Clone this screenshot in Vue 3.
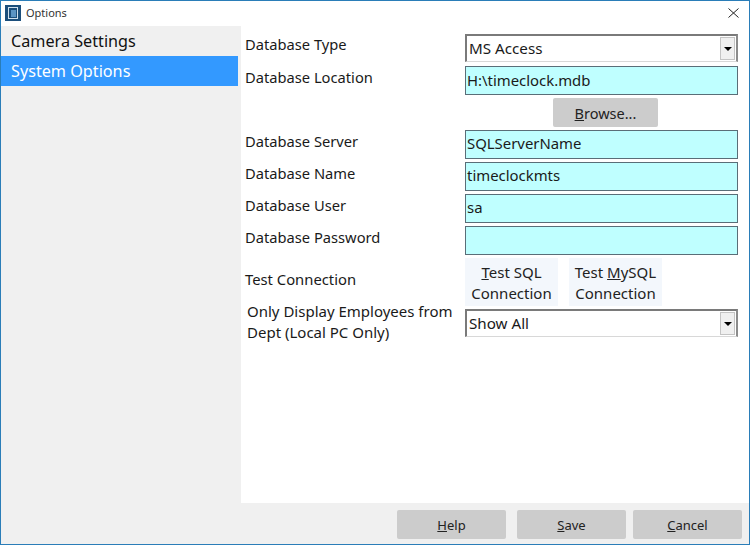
<script setup>
const fields = [
  { label: 'Database Server', value: 'SQLServerName' },
  { label: 'Database Name', value: 'timeclockmts' },
  { label: 'Database User', value: 'sa' },
  { label: 'Database Password', value: '' },
];
</script>

<template>
  <div class="window">
    <div class="titlebar">
      <svg class="app-icon" width="16" height="16" viewBox="0 0 16 16">
        <rect width="16" height="16" fill="#1c4f7c" />
        <rect x="3" y="2" width="10" height="12" fill="#cfe0ee" />
        <rect x="4" y="3" width="8" height="10" fill="#1c4f7c" />
        <rect x="6" y="5" width="5" height="7" fill="#5b94c4" />
      </svg>
      <span class="title">Options</span>
      <svg class="close" width="11" height="10" viewBox="0 0 11 10">
        <path d="M0.5 0.5 L10.5 9.5 M10.5 0.5 L0.5 9.5" stroke="#222" stroke-width="1" fill="none" />
      </svg>
    </div>

    <div class="body">
      <div class="sidebar">
        <div class="nav-item">Camera Settings</div>
        <div class="nav-item active">System Options</div>
      </div>

      <div class="content">
        <div class="row row-combo">
          <label>Database Type</label>
          <div class="combo">
            <span>MS Access</span>
            <span class="arrow"><i></i></span>
          </div>
        </div>
        <div class="row row-location">
          <label>Database Location</label>
          <div class="input">H:\timeclock.mdb</div>
        </div>
        <div class="browse-row">
          <button class="btn browse"><u>B</u>rowse...</button>
        </div>
        <div v-for="f in fields" :key="f.label" class="row row-field">
          <label>{{ f.label }}</label>
          <div class="input">{{ f.value }}</div>
        </div>
        <div class="row row-test">
          <label>Test Connection</label>
          <div class="test-buttons">
            <button class="test"><u>T</u>est SQL<br />Connection</button>
            <button class="test">Test <u>M</u>ySQL<br />Connection</button>
          </div>
        </div>
        <div class="row row-dept">
          <label class="dept-label">Only Display Employees from Dept (Local PC Only)</label>
          <div class="combo">
            <span>Show All</span>
            <span class="arrow"><i></i></span>
          </div>
        </div>
      </div>
    </div>

    <div class="footer">
      <button class="btn help"><u>H</u>elp</button>
      <button class="btn save"><u>S</u>ave</button>
      <button class="btn cancel"><u>C</u>ancel</button>
    </div>
  </div>
</template>

<style>
html,
body {
  margin: 0;
  background: #fff;
}
</style>

<style scoped>
.window {
  width: 750px;
  height: 545px;
  box-sizing: border-box;
  border: 1px solid #2a7db8;
  display: flex;
  flex-direction: column;
  font-family: "Noto Sans", "Open Sans", sans-serif;
  font-size: 14.7px;
  color: #1a1a1a;
  background: #fff;
}

.titlebar {
  height: 25px;
  display: flex;
  align-items: center;
  padding: 0 10px 2px 4px;
  box-sizing: border-box;
  flex: none;
}

.title {
  margin-left: 5px;
  font-size: 11px;
  color: #333;
}

.close {
  margin-left: auto;
}

.body {
  flex: 1;
  display: flex;
  min-height: 0;
}

.sidebar {
  width: 240px;
  background: #f0f0f0;
}

.nav-item {
  height: 30px;
  width: 227px;
  padding-left: 10px;
  line-height: 31px;
  font-size: 16.2px;
  color: #111;
}

.nav-item.active {
  background: #3399ff;
  color: #fff;
}

.content {
  flex: 1;
  padding: 8px 11px 0 4px;
}

.row {
  display: flex;
}

.row label {
  width: 220px;
  flex: none;
}

.combo,
.input {
  width: 273px;
  box-sizing: border-box;
}

.combo {
  height: 28px;
  border: 2px solid #7a7a7a;
  border-right-color: #8c8c8c;
  border-bottom: 1px solid #d8d8d8;
  display: flex;
  align-items: center;
  padding: 0 0 2px 2px;
  position: relative;
  font-size: 15.2px;
}

.arrow {
  position: absolute;
  right: 1px;
  top: 1px;
  bottom: 1px;
  width: 15px;
  background: #f0f0f0;
  border: 1px solid #c4c4c4;
  box-sizing: border-box;
  display: flex;
  align-items: center;
  justify-content: center;
}

.arrow i {
  width: 0;
  height: 0;
  border-left: 4px solid transparent;
  border-right: 4px solid transparent;
  border-top: 4px solid #000;
}

.input {
  height: 29px;
  background: #bfffff;
  border: 1px solid #5a6e78;
  padding-left: 1px;
  line-height: 26px;
  font-size: 14.9px;
}

.row-field .input {
  line-height: 24px;
}

.row-combo,
.row-location,
.row-field {
  height: 32px;
}

.row-location label,
.row-field label {
  padding-top: 1px;
}

.browse-row {
  height: 32px;
  padding-left: 308px;
}

.btn {
  height: 29px;
  width: 105px;
  padding: 0;
  border: none;
  border-radius: 2px;
  background: #cccccc;
  font: inherit;
  font-size: 14.5px;
  color: #222;
}

.row-test {
  height: 51px;
}

.row-test label {
  padding-top: 11px;
  font-size: 14.8px;
}

.test-buttons {
  display: flex;
  gap: 11px;
}

.test {
  width: 93px;
  height: 48px;
  padding: 2px 0 0;
  border: none;
  background: #f3f7fc;
  font: inherit;
  font-size: 15px;
  line-height: 21px;
  color: #222;
}

.row .dept-label {
  box-sizing: border-box;
  padding: 0 4px 0 2px;
  margin-top: -8px;
  font-size: 15px;
  line-height: 21px;
}

.footer {
  height: 41px;
  flex: none;
  background: #f0f0f0;
  display: flex;
  padding: 7px 7px 0 396px;
  box-sizing: border-box;
}

.footer .btn {
  width: 109px;
  font-size: 13px;
}

.save {
  margin-left: 11px;
}

.cancel {
  margin-left: 7px;
}
</style>
